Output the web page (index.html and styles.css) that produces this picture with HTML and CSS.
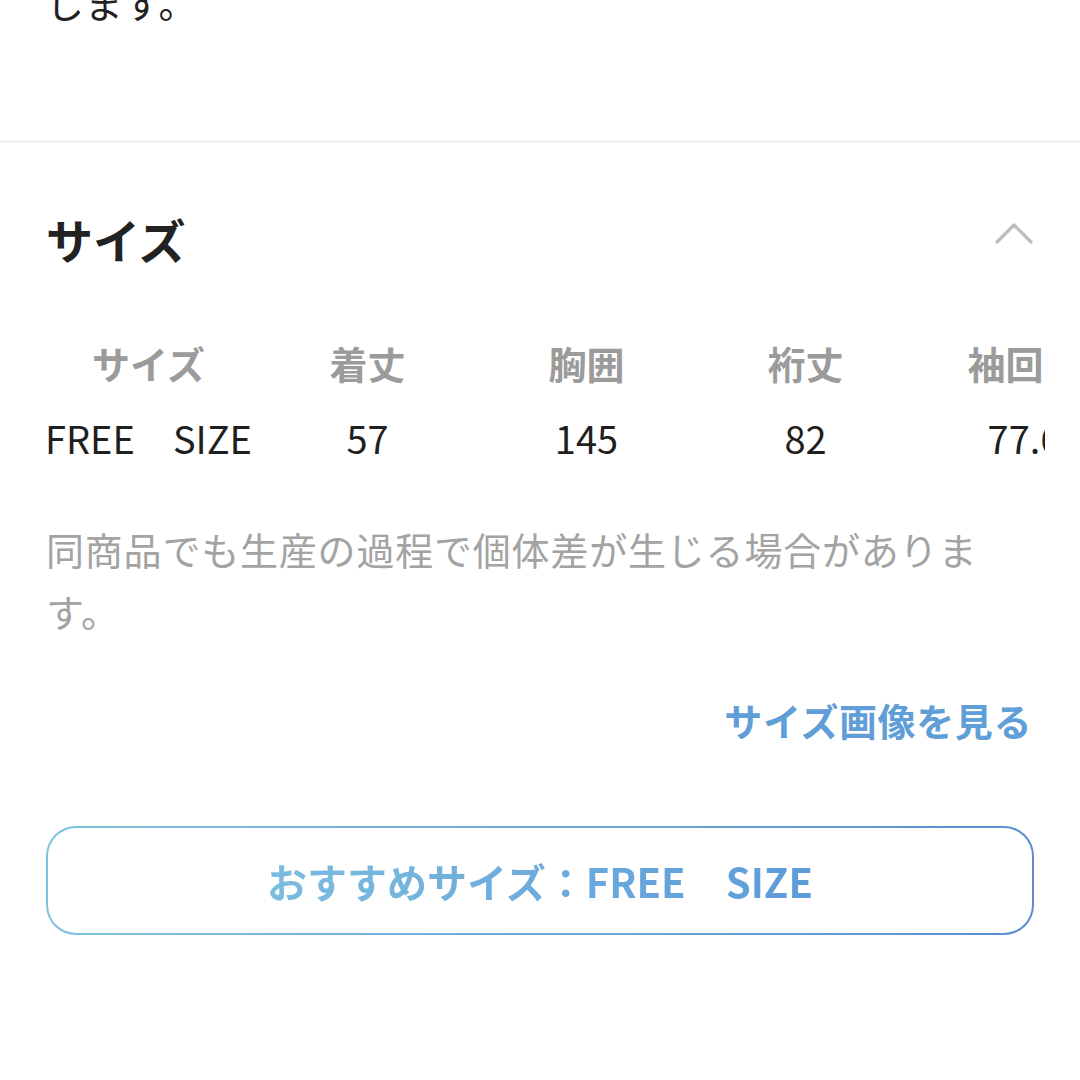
FILE: index.html
```html
<!DOCTYPE html>
<html lang="ja">
<head>
<meta charset="utf-8">
<link rel="stylesheet" href="styles.css">
</head>
<body>
<section class="desc">
  <p class="desc-text">します。</p>
</section>
<section class="size">
  <div class="size-head">
    <h2 class="size-title">サイズ</h2>
    <svg class="chevron" width="40" height="26" viewBox="0 0 40 26"><polyline points="3,22 20,5 37,22" fill="none" stroke="#bdbdbd" stroke-width="3.2" stroke-linecap="round" stroke-linejoin="round"/></svg>
  </div>
  <div class="table-wrap">
    <div class="size-table">
      <div class="th">サイズ</div>
      <div class="th">着丈</div>
      <div class="th">胸囲</div>
      <div class="th">裄丈</div>
      <div class="th">袖回り</div>
      <div class="td">FREE　SIZE</div>
      <div class="td">57</div>
      <div class="td">145</div>
      <div class="td">82</div>
      <div class="td">77.6</div>
    </div>
  </div>
  <p class="note">同商品でも生産の過程で個体差が生じる場合があります。</p>
  <div class="link-row"><a class="size-link">サイズ画像を見る</a></div>
  <div class="rec-btn"><span class="rec-text">おすすめサイズ：FREE　SIZE</span></div>
</section>
</body>
</html>
```
FILE: styles.css
```css
html, body {
  margin: 0;
  padding: 0;
  background: #fff;
  overflow: hidden;
}
body {
  width: 1080px;
  height: 1080px;
  font-family: "Noto Sans CJK JP", "Noto Sans", sans-serif;
  color: #222;
}
.desc {
  padding: 0 46px;
  border-bottom: 3px solid #f2f2f2;
}
.desc-text {
  margin: -29px 0 0;
  padding-bottom: 107px;
  font-size: 38px;
  letter-spacing: 0.8px;
  line-height: 62px;
  color: #222;
}
.size {
  padding: 68px 46px 0;
}
.size-head {
  display: flex;
  justify-content: space-between;
  align-items: flex-start;
}
.size-title {
  margin: 0;
  font-size: 47px;
  line-height: 56px;
  font-weight: 700;
  color: #222;
}
.chevron {
  margin-top: 9px;
}
.table-wrap {
  margin: 58px -35px 0 -7px;
  overflow: hidden;
  width: 1006px;
}
.size-table {
  display: grid;
  grid-template-columns: repeat(5, 219px);
  grid-auto-rows: 75px;
  width: 1095px;
}
.th, .td {
  display: flex;
  align-items: center;
  justify-content: center;
  white-space: nowrap;
}
.th {
  font-size: 38px;
  font-weight: 700;
  color: #9b9b9b;
}
.td {
  font-size: 38px;
  color: #1f1f1f;
}
.note {
  margin: 43px 0 0;
  font-size: 38px;
  letter-spacing: 0.8px;
  line-height: 62px;
  color: #a3a3a3;
}
.link-row {
  display: flex;
  justify-content: flex-end;
  margin-top: 53px;
}
.size-link {
  font-size: 38px;
  letter-spacing: 0.6px;
  line-height: 50px;
  font-weight: 700;
  color: #5f9ed6;
  margin-right: 2px;
}
.rec-btn {
  margin-top: 81px;
  height: 109px;
  box-sizing: border-box;
  border: 2.5px solid transparent;
  border-radius: 30px;
  background: linear-gradient(#fff, #fff) padding-box,
              linear-gradient(90deg, #7ec4de, #5b8ed0) border-box;
  display: flex;
  align-items: center;
  justify-content: center;
}
.rec-text {
  font-size: 40px;
  font-weight: 700;
  line-height: 50px;
  background: linear-gradient(90deg, #7cbcdf, #5d9bd9);
  -webkit-background-clip: text;
  background-clip: text;
  color: transparent;
}
```
